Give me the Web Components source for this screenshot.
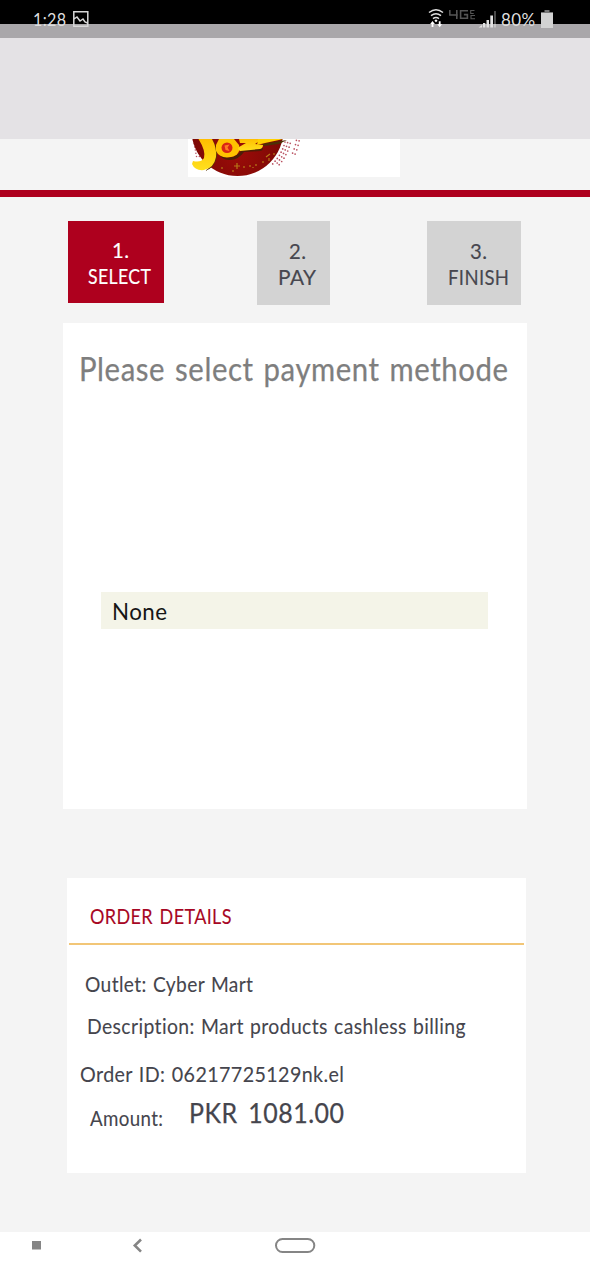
<!DOCTYPE html>
<html lang="en">
<head>
<meta charset="utf-8">
<title>Payment</title>
<style>
html,body{margin:0;padding:0;background:#f4f4f4}
body{font-family:Lato,"Open Sans",sans-serif}
</style>
</head>
<body>
<pay-app></pay-app>
<script>
// A single line of text condensed or widened to fill a given width.
class FitText extends HTMLElement {
  connectedCallback() {
    const size = parseFloat(this.getAttribute('size'));
    const width = parseFloat(this.getAttribute('width'));
    const root = this.attachShadow({ mode: 'open' });
    root.innerHTML = `<style>
      :host{display:block;width:${width}px;height:${size * 1.2}px;font-size:${size}px;line-height:${size * 1.2}px;white-space:nowrap;flex:none}
      span{display:inline-block;transform-origin:0 0;letter-spacing:.02em;word-spacing:${this.getAttribute('word') || 0}px}
    </style><span><slot></slot></span>`;
    const span = root.querySelector('span');
    const natural = span.getBoundingClientRect().width - size * .02;
    span.style.transform = `scaleX(${width / natural})`;
  }
}

class StatusBar extends HTMLElement {
  connectedCallback() {
    this.attachShadow({ mode: 'open' }).innerHTML = `<style>
      :host{display:flex;height:38px;box-sizing:border-box;padding:0 37px 0 33px;align-items:flex-start;background:linear-gradient(#000 24px,#a9a7aa 24px);color:#dedede}
      .sp{flex:1} svg{display:block;flex:none}
      fit-text{margin-top:8.5px}
    </style>
    <fit-text size="18" width="33">1:28</fit-text>
    <svg width="18" height="17" viewBox="0 0 18 17" style="margin:11px 0 0 6px" fill="none" stroke="#d8d8d8" stroke-width="1.5"><path d="M1.8 .8h14v14.5h-14zM2 8l3-2 3 4 3-2 2 3 2.5 1"/></svg>
    <span class="sp"></span>
    <svg width="74" height="24" viewBox="427 6 74 24" style="margin:6px 0 0">
      <g fill="none" stroke="#e0e0e0" stroke-width="1.5"><path d="M429 12.5q7-5.4 14 0M431 15.7q5-4 10 0M433 18.7q3-2.4 6 0"/></g>
      <path d="M436 19.2l1.6 1.5-1.6 1.6-1.6-1.6zM432.5 21l2.4 3h-1.5v3h-1.8v-3h-1.4zM439.7 27.3l-2.4-3h1.5v-3h1.8v3h1.5z" fill="#fff"/>
      <g fill="none" stroke="#555" stroke-width="1.6"><path d="M449.8 10v5h8M456.8 10v9M468 10.8h-7.4v7.4h6.8v-3.6h-3.5"/><path d="M474.5 10.5h-3.8v3h3M475 15.5h-4v3.3h4" stroke-width="1.1"/></g>
      <path d="M478.5 27.5l3.5-2.5v2.5zM483 23h2.3v4.5h-2.3zM486.5 20h2.5v7.5h-2.5zM490.3 15.5h2.7v12h-2.7z" fill="#e2e2e2"/><path d="M494 11h2v13h-2z" fill="#484848"/><path d="M494 24h2v3.5h-2z" fill="#c4c4c4"/>
    </svg>
    <fit-text size="18" width="34">80%</fit-text>
    <svg width="12" height="18" viewBox="0 0 12 18" style="margin:10px 0 0 6px"><path d="M3.5 0h5v2H12v3H0V2h3.5z" fill="#777"/><path d="M0 3h12v15H0z" fill="#d2d2d2"/></svg>`;
  }
}

// The lower part of the round brand mark, cut off by the toolbar above.
class BrandHeader extends HTMLElement {
  connectedCallback() {
    let dots = '';
    // Two fans of dots that follow the right edge of the disc.
    for (let r = 0; r < 6; r++) for (let c = 0; c < 9; c++) {
      const a = (10 + c * 4.3) * Math.PI / 180, R = 48.5 + r * 2.7;
      const x = 50 + R * Math.cos(a), y = -9 + R * Math.sin(a);
      if (y > .5 && y < 26 && r !== 3 && !(r > 3 && c > 3)) dots += `<circle cx="${x.toFixed(1)}" cy="${y.toFixed(1)}" r=".85"/>`;
    }
    let left = '';
    for (let r = 0; r < 6; r++) for (let c = 0; c < 3; c++) left += `<circle cx="${5.5 + c * 2.8 + r * .6}" cy="${1.5 + r * 3.2}" r=".75"/>`;
    this.attachShadow({ mode: 'open' }).innerHTML = `<style>
      :host{display:block;height:58.5px}
      .logo{display:block;margin-left:188px;background:#fff}
      .rule{height:7.5px;margin-top:12.6px;background:#ae001e}
    </style>
    <svg class="logo" width="212" height="38" viewBox="0 0 212 38">
      <defs><radialGradient id="disc" cx=".5" cy=".75" r=".55"><stop offset="0" stop-color="#9c0c08"/><stop offset="1" stop-color="#780805"/></radialGradient>
      <linearGradient id="gold" x1="0" x2="0" y1="0" y2="1"><stop offset="0" stop-color="#ffbe00"/><stop offset="1" stop-color="#ffe01e"/></linearGradient></defs>
      <g fill="#b9505f">${dots}${left}</g>
      <circle cx="49.5" cy="-9" r="46" fill="url(#disc)"/>
      <path d="M24 0q6 9 5 17-2 12-12 15 8-5 9-15 1-9-4-17z" fill="#5a3208"/>
      <path d="M30 13q6 7 14 5 7-2 10-8l21-1q0 3-3 3l-16 1q-5 7-13 8-9 1-13-8z" fill="#4d1d06"/>
      <path d="M74 5q12-2 25-4l-8 4-15 2z" fill="#4d3006"/>
      <path d="M10.5 0H24q5 9 4 18-2 11-12 13-9 1-12-6l1-3q8 2 11-3 2-7-5.500-19z" fill="url(#gold)"/>
      <path d="M28 6l3-6h15l5 6q2 10-8 12-11 2-15-6z" fill="#ffc200"/>
      <path d="M51 0h23l-7 5 8 1q0 3-3 4l-20 2q-3-2-1-4l7-4-6 0z" fill="url(#gold)"/>
      <path d="M70 0h25l-4 1-14 3-8 2z" fill="#ffd000"/>
      <ellipse cx="39" cy="8.8" rx="5.5" ry="5.3" fill="#d92414"/><path d="M36.5 6.5l5-1-2 3 2 3.5-4-1z" fill="#ff7a24"/>
      <path d="M49 24v6m-3-3h6M45 31v2m11-6v2m6-3v2m6-3v2m7-5v2m7-9l-4 3m8-4v2m-5 3v3m-16 6v1m-9-2v2m-22-1v2" stroke="#b87918" stroke-width="1.2" fill="none"/>
    </svg>
    <div class="rule"></div>`;
  }
}

class PayStep extends HTMLElement {
  connectedCallback() {
    this.attachShadow({ mode: 'open' }).innerHTML = `<style>
      :host{display:flex;flex-direction:column;align-items:center;box-sizing:border-box;height:84px;background:#d3d3d3;color:#47474f;-webkit-text-stroke:.15px currentColor}
      :host([active]){height:82px;background:#ae001e;color:#fff}
    </style><slot></slot>`;
  }
}

class PayCard extends HTMLElement {
  connectedCallback() {
    this.attachShadow({ mode: 'open' }).innerHTML = `<style>
      :host{display:block;box-sizing:border-box;background:#fff}
    </style><slot></slot>`;
  }
}

class NavBar extends HTMLElement {
  connectedCallback() {
    this.attachShadow({ mode: 'open' }).innerHTML = `<style>
      :host{display:flex;box-sizing:border-box;height:48px;background:#fff;padding:5px 0 0 32px}
      svg{display:block}
    </style>
    <svg width="9" height="18" viewBox="0 0 9 18"><path d="M0 4h9v8.500H0z" fill="#858585"/></svg>
    <svg width="12" height="18" viewBox="0 0 12 18" style="margin-left:91px"><path d="M9 2.500L2.800 8.500 9 14.700" fill="none" stroke="#858585" stroke-width="2.6"/></svg>
    <svg width="42" height="18" viewBox="0 0 42 18" style="margin-left:130px"><rect x="2" y="2" width="38.3" height="13" rx="6.5" fill="none" stroke="#858585" stroke-width="2"/></svg>`;
  }
}

class PayApp extends HTMLElement {
  connectedCallback() {
    this.attachShadow({ mode: 'open' }).innerHTML = `<style>
      :host{display:flex;flex-direction:column;width:590px;height:1280px;overflow:hidden;background:#f4f4f4}
      .band{height:101px;background:#e4e2e5}
      .steps{display:flex;align-items:flex-start;margin:23px 0 0 68px;height:102px}
      .select{margin-left:63px;width:464px;height:486px;padding:26.600px 0 0 16.500px;color:#7e7e7e;-webkit-text-stroke:.25px currentColor}
      .field{display:flex;box-sizing:border-box;width:387px;height:37px;margin:204px 0 0 21.500px;padding:4.800px 0 0 10.500px;background:#f4f4e8;color:#161616;-webkit-text-stroke:0}
      .order{margin:69px 0 0 67px;width:458.500px;height:295px;color:#45454d;-webkit-text-stroke:.1px currentColor}
      .head{display:flex;box-sizing:border-box;height:67px;margin:0 1.500px;padding:26px 0 0 21.500px;border-bottom:2px solid #f2c677;color:#a70724}
      .amount{display:flex}
      nav-bar{margin-top:59px}
    </style>
    <status-bar></status-bar>
    <div class="band"></div>
    <brand-header></brand-header>
    <div class="steps">
      <pay-step active style="width:96px"><fit-text size="20.5" width="17" style="margin:17.500px 0 0 8px">1.</fit-text><fit-text size="21.5" width="63" style="margin:1.200px 0 0 7px">SELECT</fit-text></pay-step>
      <pay-step style="width:73.500px;margin-left:92.500px"><fit-text size="20.5" width="17" style="margin:18.500px 0 0 8px">2.</fit-text><fit-text size="21.5" width="38" style="margin:1.500px 0 0 8px">PAY</fit-text></pay-step>
      <pay-step style="width:94px;margin-left:97px"><fit-text size="20.5" width="17" style="margin:18.500px 0 0 8px">3.</fit-text><fit-text size="21.5" width="61" style="margin:1.500px 0 0 8px">FINISH</fit-text></pay-step>
    </div>
    <pay-card class="select">
      <fit-text size="32.5" width="429" word="2" style="margin-left:-1px">Please select payment methode</fit-text>
      <div class="field"><fit-text size="24" width="55">None</fit-text></div>
    </pay-card>
    <pay-card class="order">
      <div class="head"><fit-text size="21.5" width="141.5" word="2">ORDER DETAILS</fit-text></div>
      <fit-text size="21.5" width="168" word="1" style="margin:27.500px 0 0 17.500px">Outlet: Cyber Mart</fit-text>
      <fit-text size="21.5" width="378.5" word="1" style="margin:16.500px 0 0 19.500px">Description: Mart products cashless billing</fit-text>
      <fit-text size="21.5" width="264" word="1" style="margin:22.200px 0 0 12.500px">Order ID: 06217725129nk.el</fit-text>
      <div class="amount">
        <fit-text size="21" width="73" style="margin:17px 0 0 23px">Amount:</fit-text>
        <fit-text size="26" width="155" word="4" style="margin:9.500px 0 0 26px;-webkit-text-stroke-width:.25px">PKR 1081.00</fit-text>
      </div>
    </pay-card>
    <nav-bar></nav-bar>`;
  }
}
customElements.define('fit-text', FitText);
customElements.define('status-bar', StatusBar);
customElements.define('brand-header', BrandHeader);
customElements.define('pay-step', PayStep);
customElements.define('pay-card', PayCard);
customElements.define('nav-bar', NavBar);
customElements.define('pay-app', PayApp);
</script>
</body>
</html>
